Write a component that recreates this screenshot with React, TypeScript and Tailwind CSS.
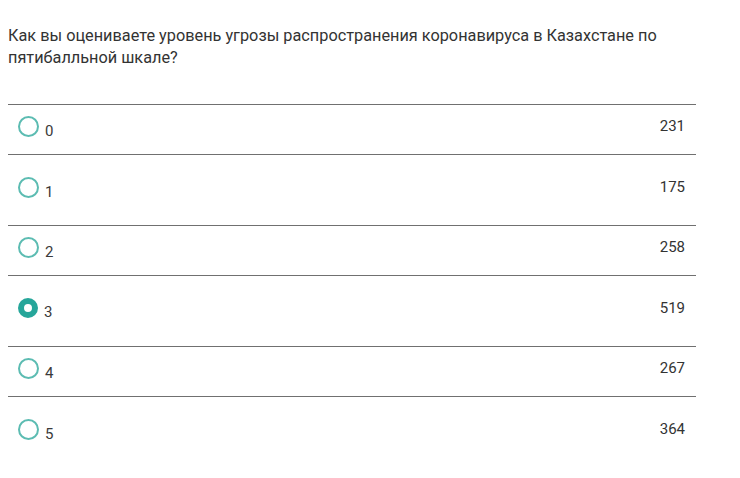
const options = [
  { label: '0', votes: 231, tall: false },
  { label: '1', votes: 175, tall: true },
  { label: '2', votes: 258, tall: false },
  { label: '3', votes: 519, tall: true, checked: true },
  { label: '4', votes: 267, tall: false },
  { label: '5', votes: 364, tall: true },
];

function Radio({ checked }: { checked?: boolean }) {
  if (checked) {
    return <span className="block w-[20px] h-[20px] rounded-full border-[6px] border-[#26a69a] bg-white shrink-0" />;
  }
  return <span className="block w-[21px] h-[21px] rounded-full border-2 border-[#5cbcb2] bg-white shrink-0" />;
}

export default function App() {
  return (
    <div className="min-h-screen bg-white font-['Roboto',sans-serif] text-[#333]">
      <div className="w-[688px] ml-[8px] pt-[25px]">
        <p className="text-[16.3px] leading-[22px] text-[#333]">
          Как вы оцениваете уровень угрозы распространения коронавируса в Казахстане по пятибалльной шкале?
        </p>

        <ul className="mt-[35px]">
          {options.map((o) => (
            <li
              key={o.label}
              className={`flex items-center justify-between border-t border-[#707070] pl-[10px] pr-[11px] pb-[6px] ${
                o.tall ? 'h-[71px]' : 'h-[50px]'
              }`}
            >
              <label className="flex items-end gap-[6px] cursor-pointer">
                <Radio checked={o.checked} />
                <span className="text-[15px] leading-[15px] -mb-[2px] text-[#3a3a3a]">{o.label}</span>
              </label>
              <span className="text-[15px] leading-[15px] text-[#333]">{o.votes}</span>
            </li>
          ))}
        </ul>
      </div>
    </div>
  );
}
